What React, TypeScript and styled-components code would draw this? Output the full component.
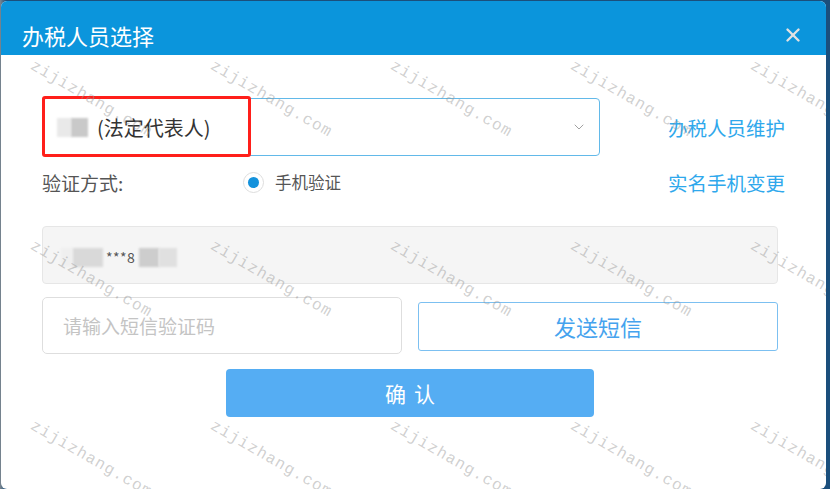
import styled, { createGlobalStyle } from "styled-components";
import { ChevronDown, X } from "lucide-react";

const GlobalStyle = createGlobalStyle`
  html, body {
    margin: 0;
    padding: 0;
    background: #1b4f7c;
    font-family: "Microsoft YaHei", "Noto Sans CJK SC", "Noto Sans", sans-serif;
  }
  * { box-sizing: border-box; }
`;

const Page = styled.div`
  width: 830px;
  height: 489px;
  padding: 1px 4px 0 1px;
  background: linear-gradient(90deg, #7d8790 0px, #1b4f7c 6px, #1b4f7c 100%);
  overflow: hidden;
`;

const Dialog = styled.div`
  width: 825px;
  height: 488px;
  background: #fff;
  border-radius: 6px;
  overflow: hidden;
  display: flex;
  flex-direction: column;
`;

const Header = styled.div`
  height: 54px;
  background: #0b95dc;
  display: flex;
  align-items: center;
  justify-content: space-between;
  padding: 13px 22px 0 21px;
  color: #fff;
  font-size: 22px;
`;

const CloseBtn = styled.span`
  display: flex;
  color: #e2e2e2;
`;

const Body = styled.div`
  flex: 1;
  padding: 43px 41px 0 41px;
  display: flex;
  flex-direction: column;
  position: relative;
`;

const Row = styled.div<{ $mt?: number; $h?: number }>`
  display: flex;
  align-items: center;
  justify-content: space-between;
  margin-top: ${(p) => p.$mt ?? 0}px;
  height: ${(p) => (p.$h ? `${p.$h}px` : "auto")};
`;

const Select = styled.div`
  width: 558px;
  height: 58px;
  border: 1px solid #62b9e9;
  border-radius: 4px;
  display: flex;
  align-items: center;
  justify-content: space-between;
  padding: 0 12px 0 14px;
  position: relative;
`;

const Highlight = styled.div`
  position: absolute;
  left: -1px;
  top: -3px;
  width: 209px;
  height: 61px;
  border: 3px solid #ff1f1a;
  border-radius: 3px;
`;

const Blur = styled.span<{ $c: string; $w: number }>`
  display: inline-block;
  width: ${(p) => p.$w}px;
  height: 19px;
  background: ${(p) => p.$c};
  filter: blur(1px);
`;

const Value = styled.div`
  display: flex;
  align-items: center;
  font-size: 20px;
  color: #333;
`;

const Owner = styled.span`
  margin-left: 9px;
`;

const Link = styled.span`
  font-size: 19.5px;
  color: #2fa8ec;
`;

const Label = styled.span`
  width: 201px;
  font-size: 19px;
  color: #555;
`;

const RadioWrap = styled.div`
  display: flex;
  align-items: center;
  gap: 11px;
  flex: 1;
  font-size: 16.5px;
  color: #555;
`;

const Radio = styled.span`
  width: 21px;
  height: 21px;
  border-radius: 50%;
  border: 1px solid #ddd;
  display: flex;
  align-items: center;
  justify-content: center;
  &::after {
    content: "";
    width: 11px;
    height: 11px;
    border-radius: 50%;
    background: #1492dc;
  }
`;

const PhoneField = styled.div`
  width: 736px;
  height: 58px;
  margin-top: 32px;
  background: #f5f5f5;
  border: 1px solid #e6e6e6;
  border-radius: 4px;
  display: flex;
  align-items: center;
  padding: 4px 0 0 18px;
  font-size: 14px;
  color: #555;
`;

const Stars = styled.span`
  margin: 0 4px 0 3px;
  letter-spacing: 0.5px;
`;

const CodeRow = styled.div`
  width: 736px;
  display: flex;
  align-items: center;
  justify-content: space-between;
  margin-top: 13px;
`;

const CodeInput = styled.div`
  width: 360px;
  height: 57px;
  border: 1px solid #dedede;
  border-radius: 5px;
  display: flex;
  align-items: center;
  padding-left: 20px;
  font-size: 19px;
  color: #c4c4c4;
`;

const SendBtn = styled.div`
  width: 360px;
  height: 49px;
  border: 1px solid #7cc0f1;
  border-radius: 3px;
  display: flex;
  align-items: center;
  justify-content: center;
  font-size: 22px;
  color: #45a3ee;
  margin-top: 1px;
`;

const Confirm = styled.div`
  width: 368px;
  height: 48px;
  margin: 15px 0 0 184px;
  background: #55adf3;
  border-radius: 4px;
  color: #fff;
  font-size: 21px;
  letter-spacing: 8px;
  padding-left: 8px;
  display: flex;
  align-items: center;
  justify-content: center;
`;

const Watermarks = styled.div`
  position: absolute;
  inset: 0;
  pointer-events: none;
  display: grid;
  grid-template-columns: repeat(5, 180px);
  grid-auto-rows: 180px;
  padding: 0 0 0 29px;
`;

const Mark = styled.span`
  font-family: "Liberation Mono", "DejaVu Sans Mono", monospace;
  font-size: 16px;
  letter-spacing: 1px;
  color: rgba(150, 150, 150, 0.45);
  white-space: nowrap;
  transform-origin: 0 0;
  transform: translate(6px, 2px) rotate(30deg);
  height: 0;
`;

export default function App() {
  const marks = Array.from({ length: 15 });
  return (
    <>
      <GlobalStyle />
      <Page>
        <Dialog>
          <Header>
            <span>办税人员选择</span>
            <CloseBtn>
              <X size={22} strokeWidth={2.6} />
            </CloseBtn>
          </Header>
          <Body>
            <Row>
              <Select>
                <Value>
                  <Blur $c="#e9e9e9" $w={14} />
                  <Blur $c="#c9c9c9" $w={17} />
                  <Owner>(法定代表人)</Owner>
                </Value>
                <ChevronDown size={16} strokeWidth={1.4} color="#9a9a9a" />
                <Highlight />
              </Select>
              <Link>办税人员维护</Link>
            </Row>
            <Row $mt={14} $h={24}>
              <Label>验证方式:</Label>
              <RadioWrap>
                <Radio />
                <span>手机验证</span>
              </RadioWrap>
              <Link>实名手机变更</Link>
            </Row>
            <PhoneField>
              <Blur $c="#efefef" $w={12} />
              <Blur $c="#d9d9d9" $w={30} />
              <Stars>***8</Stars>
              <Blur $c="#cdcdcd" $w={20} />
              <Blur $c="#e0e0e0" $w={18} />
            </PhoneField>
            <CodeRow>
              <CodeInput>请输入短信验证码</CodeInput>
              <SendBtn>发送短信</SendBtn>
            </CodeRow>
            <Confirm>确认</Confirm>
            <Watermarks>
              {marks.map((_, i) => (
                <Mark key={i}>zijizhang.com</Mark>
              ))}
            </Watermarks>
          </Body>
        </Dialog>
      </Page>
    </>
  );
}
